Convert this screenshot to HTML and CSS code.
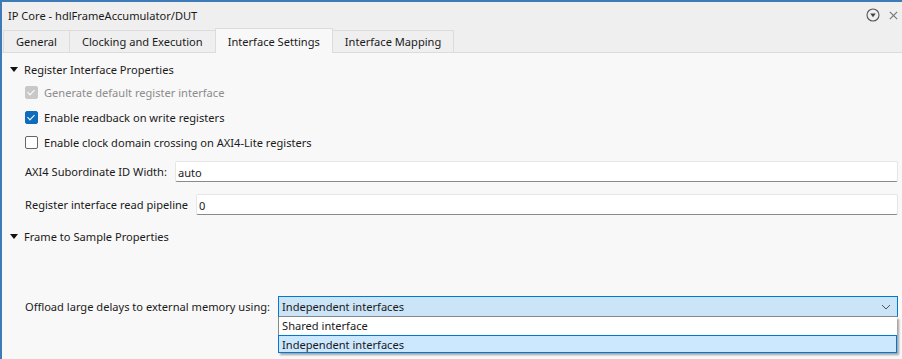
FILE: index.html
```html
<!DOCTYPE html>
<html lang="en">
<head>
    <meta charset="UTF-8">
    <title>IP Core - hdlFrameAccumulator/DUT</title>
    <link rel="stylesheet" href="styles.css">
</head>
<body>
    <div class="panel">
        <div class="titlebar">
            <span class="title">IP Core - hdlFrameAccumulator/DUT</span>
            <span class="tools">
                <svg width="14" height="14" viewBox="0 0 14 14">
                    <circle cx="7" cy="7" r="6" fill="none" stroke="#555" stroke-width="1.1"/>
                    <path d="M4.2 5.6 L9.8 5.6 L7 9.2 Z" fill="#444"/>
                </svg>
                <svg width="11" height="11" viewBox="0 0 12 12">
                    <path d="M2 2 L10 10 M10 2 L2 10" stroke="#777" stroke-width="1.3"/>
                </svg>
            </span>
        </div>

        <div class="tabs">
            <div class="tab">General</div>
            <div class="tab">Clocking and Execution</div>
            <div class="tab active">Interface Settings</div>
            <div class="tab">Interface Mapping</div>
        </div>

        <div class="content">
            <div class="section"><span class="caret"></span>Register Interface Properties</div>

            <div class="check disabled"><span class="box on"></span>Generate default register interface</div>
            <div class="check"><span class="box on blue"></span>Enable readback on write registers</div>
            <div class="check"><span class="box"></span>Enable clock domain crossing on AXI4-Lite registers</div>

            <div class="field">
                <label>AXI4 Subordinate ID Width:</label>
                <div class="input">auto</div>
            </div>
            <div class="field">
                <label>Register interface read pipeline</label>
                <div class="input">0</div>
            </div>

            <div class="section second"><span class="caret"></span>Frame to Sample Properties</div>

            <div class="field offload">
                <label>Offload large delays to external memory using:</label>
                <div class="combo">
                    <div class="select">
                        <span>Independent interfaces</span>
                        <svg width="10" height="6" viewBox="0 0 10 6">
                            <path d="M1 1 L5 5 L9 1" fill="none" stroke="#555" stroke-width="1"/>
                        </svg>
                    </div>
                    <div class="menu">
                        <div class="option">Shared interface</div>
                        <div class="option picked">Independent interfaces</div>
                    </div>
                </div>
            </div>
        </div>
    </div>
</body>
</html>
```

FILE: styles.css
```css
body {
    margin: 0;
    font-family: "Noto Sans", "Open Sans", sans-serif;
    font-size: 11.1px;
    color: #1a1a1a;
    background: #f8f8f8;
}

.panel {
    width: 902px;
    height: 359px;
    border-top: 2px solid #3d7ab8;
    border-left: 2px solid #3d7ab8;
    box-sizing: border-box;
    background: #f8f8f8;
    overflow: hidden;
}

.titlebar {
    height: 25px;
    display: flex;
    align-items: center;
    justify-content: space-between;
    padding: 0 3px 0 6px;
    background: #efefef;
}

.title {
    margin-top: 2px;
}

.tools {
    display: flex;
    align-items: center;
    gap: 8px;
    margin-top: 1px;
}

.tabs {
    display: flex;
    align-items: flex-end;
    height: 25px;
    padding-left: 1px;
    background: #efefef;
    border-bottom: 1px solid #dcdcdc;
}

.tab {
    height: 21px;
    padding: 0 12px;
    line-height: 22px;
    border: 1px solid #dcdcdc;
    border-bottom: none;
    margin-right: -1px;
    background: #efefef;
}

.tab.active {
    line-height: 25px;
    padding: 0 12px;
    background: #f8f8f8;
    margin-bottom: -1px;
    height: 24px;
}

.content {
    padding: 5px 4px 0 6px;
}

.section {
    display: flex;
    align-items: center;
    height: 22px;
}

.section.second {
    margin-top: 4px;
}

.caret {
    width: 0;
    height: 0;
    border-left: 4px solid transparent;
    border-right: 4px solid transparent;
    border-top: 5px solid #111;
    margin: 0 6px 0 2px;
}

.check {
    display: flex;
    align-items: center;
    height: 25px;
    padding-left: 17px;
}

.check.disabled {
    color: #8c8c8c;
}

.box {
    width: 11px;
    height: 11px;
    border: 1px solid #666;
    border-radius: 2px;
    margin-right: 6px;
    background: #fff;
    position: relative;
}

.box.on {
    background: #c8c8c8;
    border-color: #c8c8c8;
}

.box.on::after {
    content: "";
    position: absolute;
    left: 3px;
    top: 1px;
    width: 3px;
    height: 6px;
    border: solid #fff;
    border-width: 0 1px 1px 0;
    transform: rotate(45deg);
}

.box.blue {
    background: #0f6cbd;
    border-color: #0f6cbd;
}

.field {
    display: flex;
    align-items: center;
    gap: 8px;
    padding-left: 17px;
    height: 33px;
}

.field label {
    white-space: nowrap;
}

.input {
    flex: 1;
    height: 21px;
    line-height: 21px;
    box-sizing: border-box;
    padding-left: 2px;
    background: #fff;
    border: 1px solid #e6e6e6;
    border-bottom: 1px solid #8a8a8a;
    border-radius: 2px;
}

.offload {
    margin-top: 49px;
    align-items: flex-start;
    height: auto;
}

.offload label {
    line-height: 21px;
}

.combo {
    flex: 1;
    position: relative;
}

.select {
    height: 21px;
    box-sizing: border-box;
    display: flex;
    align-items: center;
    justify-content: space-between;
    padding: 0 6px 0 3px;
    background: #cce4f7;
    border: 1px solid #0078d4;
    border-bottom-color: #888;
}

.menu {
    margin-right: 1px;
    background: #fff;
    border-left: 1px solid #888;
    box-shadow: 2px 2px 2px rgba(0, 0, 0, 0.35);
}

.option {
    height: 18px;
    line-height: 18px;
    padding-left: 3px;
    box-sizing: border-box;
}

.option.picked {
    background: #cce8ff;
    border: 1px solid #0078d4;
    margin-left: -1px;
    padding-left: 3px;
}
```
